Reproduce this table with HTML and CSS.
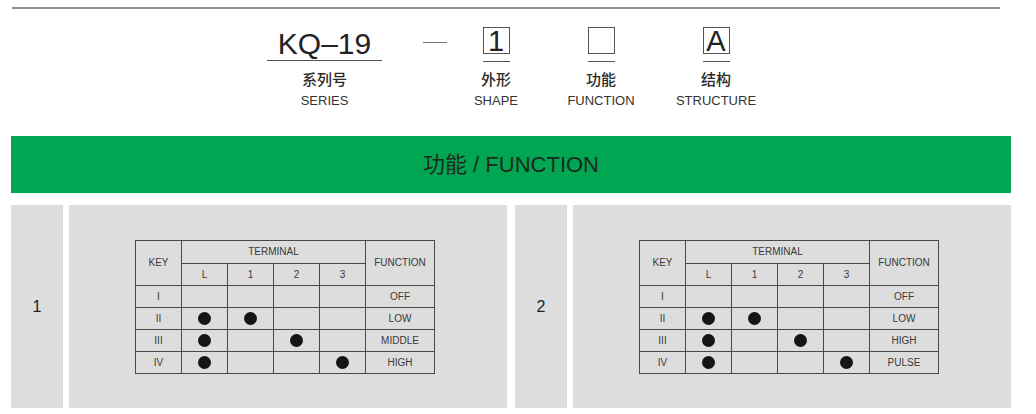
FILE: index.html
```html
<!DOCTYPE html>
<html lang="zh">
<head>
<meta charset="utf-8">
<title>KQ-19 功能</title>
<link rel="stylesheet" href="styles.css">
</head>
<body>
<div class="page">
  <div class="rule"></div>
  <div class="code-row">
    <div class="item series">
      <div class="code">KQ–19</div>
      <div class="labels">
        <div class="cn">系列号</div>
        <div class="en">SERIES</div>
      </div>
    </div>
    <div class="dash"></div>
    <div class="item boxitem shape">
      <div class="box">1</div>
      <div class="uline"></div>
      <div class="labels">
        <div class="cn">外形</div>
        <div class="en">SHAPE</div>
      </div>
    </div>
    <div class="item boxitem func">
      <div class="box"></div>
      <div class="uline"></div>
      <div class="labels">
        <div class="cn">功能</div>
        <div class="en">FUNCTION</div>
      </div>
    </div>
    <div class="item boxitem struct">
      <div class="box">A</div>
      <div class="uline"></div>
      <div class="labels">
        <div class="cn">结构</div>
        <div class="en">STRUCTURE</div>
      </div>
    </div>
  </div>

  <div class="title-bar">功能 / FUNCTION</div>

  <div class="panels">
    <div class="group">
      <div class="num">1</div>
      <div class="panel">
        <table class="tbl">
          <colgroup><col class="c-key"><col class="c-t"><col class="c-t"><col class="c-t"><col class="c-t"><col class="c-fn"></colgroup>
          <tr class="h1"><td rowspan="2">KEY</td><td colspan="4">TERMINAL</td><td rowspan="2">FUNCTION</td></tr>
          <tr class="h2"><td>L</td><td>1</td><td>2</td><td>3</td></tr>
          <tr><td>I</td><td></td><td></td><td></td><td></td><td>OFF</td></tr>
          <tr><td>II</td><td><span class="dot"></span></td><td><span class="dot"></span></td><td></td><td></td><td>LOW</td></tr>
          <tr><td>III</td><td><span class="dot"></span></td><td></td><td><span class="dot"></span></td><td></td><td>MIDDLE</td></tr>
          <tr class="last"><td>IV</td><td><span class="dot"></span></td><td></td><td></td><td><span class="dot"></span></td><td>HIGH</td></tr>
        </table>
      </div>
    </div>
    <div class="group">
      <div class="num">2</div>
      <div class="panel">
        <table class="tbl">
          <colgroup><col class="c-key"><col class="c-t"><col class="c-t"><col class="c-t"><col class="c-t"><col class="c-fn"></colgroup>
          <tr class="h1"><td rowspan="2">KEY</td><td colspan="4">TERMINAL</td><td rowspan="2">FUNCTION</td></tr>
          <tr class="h2"><td>L</td><td>1</td><td>2</td><td>3</td></tr>
          <tr><td>I</td><td></td><td></td><td></td><td></td><td>OFF</td></tr>
          <tr><td>II</td><td><span class="dot"></span></td><td><span class="dot"></span></td><td></td><td></td><td>LOW</td></tr>
          <tr><td>III</td><td><span class="dot"></span></td><td></td><td><span class="dot"></span></td><td></td><td>HIGH</td></tr>
          <tr class="last"><td>IV</td><td><span class="dot"></span></td><td></td><td></td><td><span class="dot"></span></td><td>PULSE</td></tr>
        </table>
      </div>
    </div>
  </div>
</div>
</body>
</html>
```

FILE: styles.css
```css
html, body {
  margin: 0;
  padding: 0;
  background: #ffffff;
}
body {
  font-family: "Liberation Sans", Arial, "Noto Sans CJK SC", sans-serif;
  color: #222;
}
.page {
  width: 1000px;
  margin-left: 11px;
  padding-top: 7px;
}
.rule {
  margin-left: 1px;
  width: 988px;
  height: 2px;
  background: #8f8f8f;
}
.code-row {
  display: flex;
  align-items: flex-start;
  margin-top: 18px;
  padding-left: 256px;
}
.item {
  display: flex;
  flex-direction: column;
  align-items: center;
}
.series {
  width: 115px;
}
.code {
  width: 115px;
  height: 33px;
  font-size: 30px;
  line-height: 33px;
  text-align: center;
  color: #222;
  border-bottom: 1px solid #555;
}
.series .labels {
  margin-top: 7px;
}
.labels {
  display: flex;
  flex-direction: column;
  align-items: center;
  white-space: nowrap;
}
.cn {
  font-family: "Noto Sans CJK SC", sans-serif;
  font-size: 15px;
  font-weight: 500;
  line-height: 22px;
  color: #2a2a2a;
}
.en {
  font-size: 13px;
  line-height: 22px;
  color: #333;
}
.dash {
  width: 24px;
  height: 1px;
  background: #777;
  margin-left: 41px;
  margin-top: 15px;
}
.shape {
  width: 60px;
  margin-left: 19px;
}
.func {
  width: 70px;
  margin-left: 40px;
}
.struct {
  width: 90px;
  margin-left: 35px;
}
.box {
  box-sizing: border-box;
  width: 27px;
  height: 27px;
  border: 1px solid #555;
  font-size: 29px;
  line-height: 27px;
  text-align: center;
  color: #222;
}
.uline {
  width: 27px;
  height: 1px;
  margin-top: 7px;
  background: #555;
}
.boxitem .labels {
  margin-top: 6px;
}
.title-bar {
  margin-top: 24px;
  height: 57px;
  background: #00a651;
  color: #1c2a1f;
  font-family: "Liberation Sans", Arial, "Noto Sans CJK SC", sans-serif;
  font-size: 22px;
  line-height: 57px;
  text-align: center;
}
.panels {
  display: flex;
  gap: 8px;
  margin-top: 12px;
}
.group {
  display: flex;
  gap: 6px;
  width: 496px;
}
.num {
  width: 52px;
  height: 203px;
  background: #dddddd;
  display: flex;
  align-items: center;
  justify-content: center;
  font-size: 16px;
  color: #222;
}
.panel {
  width: 438px;
  height: 203px;
  background: #dddddd;
  display: flex;
  align-items: center;
  justify-content: center;
}
.tbl {
  border-collapse: collapse;
  table-layout: fixed;
  width: 299px;
  margin-right: 6px;
  font-size: 10px;
  color: #3a3a3a;
}
.c-key, .c-t { width: 46px; }
.c-fn { width: 69px; }
.tbl td {
  border: 1px solid #4a4a4a;
  padding: 0;
  height: 21px;
  text-align: center;
  vertical-align: middle;
}
.tbl tr.h1 td { height: 22px; }
.tbl tr.h2 td { height: 21px; }
.dot {
  display: inline-block;
  width: 13px;
  height: 13px;
  border-radius: 50%;
  background: #141414;
  vertical-align: middle;
}
```
